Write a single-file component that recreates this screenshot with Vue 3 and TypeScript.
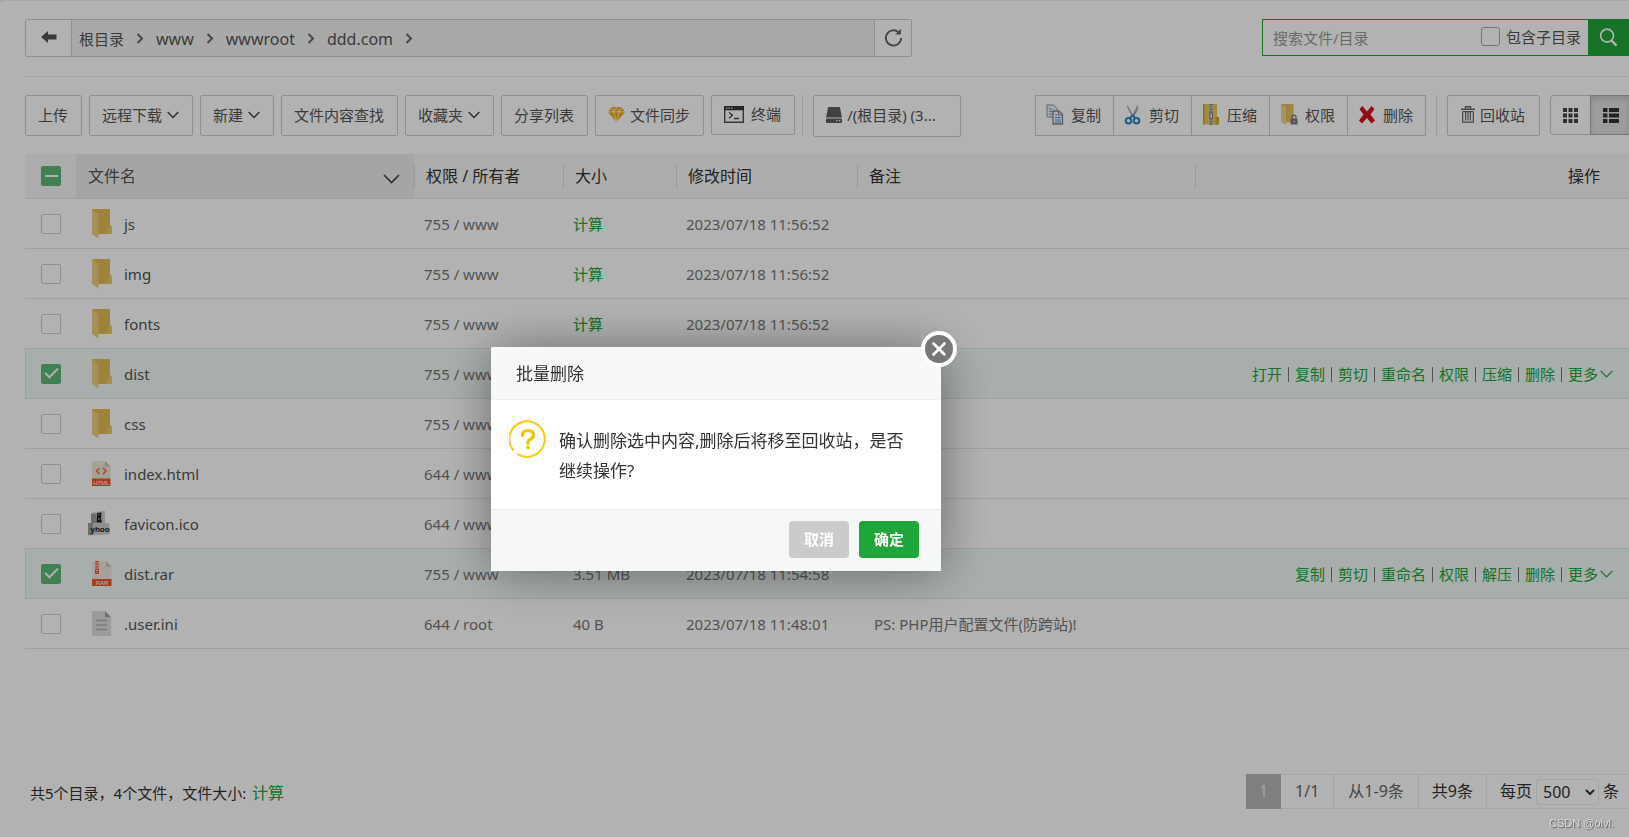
<script setup lang="ts">
import { ref } from 'vue'

type Kind = 'folder' | 'html' | 'ico' | 'rar' | 'text'

interface FileRow {
  name: string
  kind: Kind
  owner: string
  size: string
  time: string
  note?: string
  checked: boolean
  actions?: string[]
}

const crumbs: string[] = ['www', 'wwwroot', 'ddd.com']

const files = ref<FileRow[]>([
  { name: 'js', kind: 'folder', owner: '755 / www', size: '', time: '2023/07/18 11:56:52', checked: false },
  { name: 'img', kind: 'folder', owner: '755 / www', size: '', time: '2023/07/18 11:56:52', checked: false },
  { name: 'fonts', kind: 'folder', owner: '755 / www', size: '', time: '2023/07/18 11:56:52', checked: false },
  {
    name: 'dist', kind: 'folder', owner: '755 / www', size: '', time: '', checked: true,
    actions: ['打开', '复制', '剪切', '重命名', '权限', '压缩', '删除'],
  },
  { name: 'css', kind: 'folder', owner: '755 / www', size: '', time: '', checked: false },
  { name: 'index.html', kind: 'html', owner: '644 / www', size: '', time: '', checked: false },
  { name: 'favicon.ico', kind: 'ico', owner: '644 / www', size: '', time: '', checked: false },
  {
    name: 'dist.rar', kind: 'rar', owner: '755 / www', size: '3.51 MB', time: '2023/07/18 11:54:58', checked: true,
    actions: ['复制', '剪切', '重命名', '权限', '解压', '删除'],
  },
  { name: '.user.ini', kind: 'text', owner: '644 / root', size: '40 B', time: '2023/07/18 11:48:01', note: 'PS: PHP用户配置文件(防跨站)!', checked: false },
])

const keyword = ref('')
const recursive = ref(false)
const pageSize = ref('500')
</script>

<template>
  <div class="app">
    <main class="page">
      <div class="topbar">
        <nav class="path" aria-label="路径">
          <button class="back" type="button" aria-label="返回上一级">
            <svg width="16" height="12" viewBox="0 0 16 12"><path d="M0 6 7 0v3.600h8.500v4.800H7V12z" fill="#555" /></svg>
          </button>
          <div class="crumbs">
            <a class="root" href="#">根目录</a>
            <svg class="sep" width="8" height="11" viewBox="0 0 8 11"><path d="m1.500 1 4.500 4.500-4.500 4.500" fill="none" stroke="#666" stroke-width="2" /></svg>
            <template v-for="c in crumbs" :key="c">
              <a href="#">{{ c }}</a>
              <svg class="sep" width="8" height="11" viewBox="0 0 8 11"><path d="m1.500 1 4.500 4.500-4.500 4.500" fill="none" stroke="#666" stroke-width="2" /></svg>
            </template>
          </div>
          <button class="reload" type="button" aria-label="刷新">
            <svg width="19" height="19" viewBox="0 0 20 20"><path d="M15.500 4.600A8 8 0 1 0 18 10.500" fill="none" stroke="#666" stroke-width="2" /><path d="M17.800.8v6h-6z" fill="#666" /></svg>
          </button>
        </nav>
        <form class="search" @submit.prevent>
          <input v-model="keyword" class="keyword" type="text" placeholder="搜索文件/目录" aria-label="搜索文件/目录">
          <label class="sub"><input v-model="recursive" type="checkbox" class="plain">包含子目录</label>
          <button class="go" type="submit" aria-label="搜索">
            <svg width="19" height="19" viewBox="0 0 20 20"><circle cx="8.500" cy="8" r="6.800" fill="none" stroke="#fff" stroke-width="1.800" /><path d="m13 13 5.500 5.500" stroke="#fff" stroke-width="2.400" /></svg>
          </button>
        </form>
      </div>

      <div class="toolbar">
        <div class="tools">
          <button class="btn" type="button">上传</button>
          <button class="btn" type="button">远程下载<svg width="12" height="8" viewBox="0 0 12 8"><path d="m.7 1 5.300 5.500L11.300 1" fill="none" stroke="#444" stroke-width="1.500" /></svg></button>
          <button class="btn" type="button">新建<svg width="12" height="8" viewBox="0 0 12 8"><path d="m.7 1 5.300 5.500L11.300 1" fill="none" stroke="#444" stroke-width="1.500" /></svg></button>
          <button class="btn" type="button">文件内容查找</button>
          <button class="btn" type="button">收藏夹<svg width="12" height="8" viewBox="0 0 12 8"><path d="m.7 1 5.300 5.500L11.300 1" fill="none" stroke="#444" stroke-width="1.500" /></svg></button>
          <button class="btn" type="button">分享列表</button>
          <button class="btn" type="button">
            <svg width="17" height="15" viewBox="0 0 17 15"><path d="M3.500 0h10L17 5l-8.500 10L0 5z" fill="#f5a312" /><path d="M0 4.900h17M5.500 5l3 9.500 3-9.500M3.700.5 5.500 5l3-4.500 3 4.500 1.800-4.500" fill="none" stroke="#fff" stroke-width=".8" /></svg>
            文件同步
          </button>
          <button class="btn term" type="button">
            <svg width="20" height="17" viewBox="0 0 20 17"><path d="M.7.700h18.600v15.600H.700z" fill="#fff" stroke="#4b4f58" stroke-width="1.400" /><path d="M0 0h20v4.300H0z" fill="#33363c" /><path d="M2 2.200h1.300M4.600 2.200h1.300M7.200 2.200h1.300" stroke="#fff" stroke-width="1.200" /><path d="m5 6.500 3.500 2.800L5 12.200M10 12.500h5" fill="none" stroke="#444" stroke-width="1.300" /></svg>
            终端
          </button>
          <span class="bar"></span>
          <button class="btn disk" type="button">
            <svg width="16" height="16" viewBox="0 0 16 16"><path d="M3 0h10q.8 0 1 .8L16 10.500H0L2 .8Q2.200 0 3 0z" fill="#5d5d5d" /><rect y="11.500" width="16" height="4.500" rx="1" fill="#5d5d5d" /><path d="M10.500 13.700h1.200M13 13.700h1.200" stroke="#fff" stroke-width="1.200" /></svg>
            <span>/(根目录) (3...</span>
          </button>
        </div>

        <div class="tools right">
          <div class="group">
            <button class="btn" type="button">
              <svg width="18" height="21" viewBox="0 0 18 21"><path d="M1 1h6.500L11 4.500V13H1z" fill="#eef2f7" stroke="#888f99" /><path d="M3 5h3M3 7.500h4M3 10h4" stroke="#6c9bd0" /><path d="M7 7h6l3.500 3.500V20H7z" fill="#f6f8fb" stroke="#7c838c" stroke-width="1.300" /><path d="M12.500 7v4h4" fill="none" stroke="#7c838c" /><path d="M9 11h2.500M9 13.500h6M9 16h6M9 18h6" stroke="#4f8fd6" /></svg>
              复制
            </button>
            <button class="btn" type="button">
              <svg width="18" height="21" viewBox="0 0 18 21"><path d="m3 .5 7.500 13-1.500 1L3.500 4zM14 .5 7.500 12.500l1.500 2 4.800-9z" fill="#9aa4ad" /><ellipse cx="4.500" cy="16.800" rx="2.800" ry="2.800" fill="none" stroke="#2b83bd" stroke-width="2" /><ellipse cx="12.500" cy="16.800" rx="2.800" ry="2.800" fill="none" stroke="#2b83bd" stroke-width="2" /><path d="m5.500 14 3-2.500 3 2.500" fill="none" stroke="#2b83bd" stroke-width="1.800" /></svg>
              剪切
            </button>
            <button class="btn" type="button">
              <svg width="18" height="21" viewBox="0 0 18 21"><path d="M1 0h14v12.500l2 1.500v6.500H1z" fill="#e8c756" /><path d="M1 0h1.500v20.500H1zM13.500 13H17v7.500h-3.500z" fill="#c9a638" /><path d="M6.500 0h5v20.500h-5z" fill="#d8cfa9" /><path d="M9 0v20.500" stroke="#777" stroke-width="3" stroke-dasharray="1.200 1.200" /><rect x="8" y="9" width="2.500" height="5.500" fill="#eee" stroke="#666" stroke-width=".8" /></svg>
              压缩
            </button>
            <button class="btn" type="button">
              <svg width="18" height="21" viewBox="0 0 18 21"><path d="M1 0h12.500v18.500H6z" fill="#e5bd5c" /><path d="M1 0 6 3.500V21l-5-3z" fill="#f0d58f" /><rect x="10.500" y="14.500" width="7" height="6" rx="1" fill="#777" /><path d="M12 14.500v-1.300a2 2 0 0 1 4 0v1.300" fill="none" stroke="#777" stroke-width="1.300" /><path d="M14 16.500v2" stroke="#fff" /></svg>
              权限
            </button>
            <button class="btn" type="button">
              <svg width="18" height="21" viewBox="0 0 18 21"><path d="M4.500 2 9 7.500 13.500 2l3 3-4 5.500 4.500 6-3.500 3L9 14l-5 5.500-3-3 4.500-6L1.500 5z" fill="#d60f1c" /></svg>
              删除
            </button>
          </div>
          <span class="bar"></span>
          <button class="btn trash" type="button">
            <svg width="14" height="17" viewBox="0 0 14 17"><path d="M4.500 2.500V.7h5v1.800M0 3.200h14" fill="none" stroke="#666" stroke-width="1.400" /><path d="M1.700 5.500v10.700h10.600V5.500M4.600 5.500v9M7 5.500v9M9.400 5.500v9M1.700 5.600h10.600" fill="none" stroke="#666" stroke-width="1.200" /></svg>
            回收站
          </button>
          <div class="views">
            <button type="button" aria-label="网格视图">
              <svg width="15" height="15" viewBox="0 0 15 15"><path d="M2 0v15M7.500 0v15M13 0v15" stroke="#444" stroke-width="4" stroke-dasharray="4 1.500" /></svg>
            </button>
            <button type="button" class="on" aria-label="列表视图">
              <svg width="16" height="15" viewBox="0 0 16 15"><path d="M2.200 0v15" stroke="#333" stroke-width="4.400" stroke-dasharray="4 1.500" /><path d="M11 0v15" stroke="#333" stroke-width="10" stroke-dasharray="4 1.500" /></svg>
            </button>
          </div>
        </div>
      </div>

      <table class="files">
        <colgroup>
          <col class="c-check"><col class="c-name"><col class="c-owner"><col class="c-size"><col class="c-time"><col class="c-note"><col>
        </colgroup>
        <thead>
          <tr>
            <th class="check"><input type="checkbox" class="box partial" aria-label="全选"></th>
            <th class="sorted">
              <button type="button" class="sort">文件名<svg width="17" height="10" viewBox="0 0 17 10"><path d="m1 1 7.500 7.500L16 1" fill="none" stroke="#444" stroke-width="1.600" /></svg></button>
            </th>
            <th class="line">权限 / 所有者</th>
            <th class="line">大小</th>
            <th class="line">修改时间</th>
            <th class="line">备注</th>
            <th class="line ops-head">操作</th>
          </tr>
        </thead>
        <tbody>
          <tr v-for="f in files" :key="f.name" :class="{ picked: f.checked }">
            <td class="check"><input v-model="f.checked" type="checkbox" class="box" :aria-label="f.name"></td>
            <td>
              <div class="name">
                <span class="ficon">
                  <svg v-if="f.kind === 'folder'" width="20" height="30" viewBox="0 0 20 30"><path d="M0 0h18v15.500l1.500 2V25H6z" fill="#e2bb52" /><path d="M13 25h6.500v-7.500L18 16z" fill="#e9c763" /><path d="M0 0 6.500 5v24.500L0 25z" fill="#edcf80" /></svg>
                  <svg v-else-if="f.kind === 'html'" width="20" height="26" viewBox="0 0 20 26"><path d="M0 0h13l5.500 5.500V18H0z" fill="#ece8d6" /><path d="M13 0l5.500 5.500H13z" fill="#c8c4b6" /><path d="m7.500 7-3 3 3 3M11 7l3 3-3 3" fill="none" stroke="#f06a3a" stroke-width="1.500" /><path d="M0 17.500h18.500V25H0z" fill="#e9592b" /><text x="9.300" y="23.800" class="tag">HTML</text></svg>
                  <svg v-else-if="f.kind === 'rar'" width="20" height="26" viewBox="0 0 20 26"><path d="M0 0h14l5.500 5.500V18H0z" fill="#efe6e1" /><path d="M14 0l5.500 6H14z" fill="#cfc6c1" /><path d="M5 0v13" stroke="#e9592b" stroke-width="3.500" stroke-dasharray="1.500 1" /><path d="M3.500 8.500v4h3v-4" fill="none" stroke="#e9592b" /><path d="M0 18h19.500v7H0z" fill="#e9592b" /><text x="10" y="24" class="tag">RAR</text></svg>
                  <svg v-else-if="f.kind === 'text'" width="20" height="26" viewBox="0 0 20 26"><path d="M0 0h13l6 6v19H0z" fill="#dedede" /><path d="M13 0l6 6h-6z" fill="#a5a5a5" /><path d="M4 9.500h11M4 14h11M4 18.500h11" stroke="#b5b5b5" stroke-width="1.300" /></svg>
                  <svg v-else class="wide" width="24" height="26" viewBox="0 0 24 26"><path d="m3 2 14-1.500V13H3z" fill="#b8b8b8" /><path d="m7 1 10-1v12h4l1 11-8 1-14 .5V12h7z" fill="#cfcfcf" /><path d="M0 12h5v12H0zM3 3h5v9H3z" fill="#9b9b9b" /><path d="m9 2 4.500-.5-.5 6 1 4H8.500z" fill="#222" /><path d="M10.500 3.500h1M10 8h2" stroke="#bbb" /><text x="12" y="21" class="logo">yhoo</text></svg>
                </span>
                <a href="#">{{ f.name }}</a>
              </div>
            </td>
            <td>{{ f.owner }}</td>
            <td><a v-if="!f.size && f.time" href="#" class="green">计算</a><template v-else>{{ f.size }}</template></td>
            <td>{{ f.time }}</td>
            <td class="note">{{ f.note }}</td>
            <td>
              <div v-if="f.actions" class="ops">
                <template v-for="a in f.actions" :key="a"><a href="#" class="green">{{ a }}</a><i></i></template>
                <a href="#" class="green more">更多<svg width="13" height="8" viewBox="0 0 13 8"><path d="m.6.800 5.900 6 5.900-6" fill="none" stroke="#20a53a" stroke-width="1.200" /></svg></a>
              </div>
            </td>
          </tr>
        </tbody>
      </table>

      <footer class="foot">
        <p class="total">共5个目录，4个文件，文件大小: <a href="#" class="green">计算</a></p>
        <div class="pager">
          <span class="current">1</span>
          <span class="soft">1/1</span>
          <span class="soft">从1-9条</span>
          <span>共9条</span>
          <label class="per">每页
            <select v-model="pageSize"><option>500</option></select>
            条</label>
        </div>
      </footer>
    </main>

    <div class="shade"></div>

    <section class="dialog" role="dialog" aria-labelledby="dialog-title">
      <h2 id="dialog-title">批量删除</h2>
      <button class="close" type="button" aria-label="关闭">
        <svg width="14" height="14" viewBox="0 0 14 14"><path d="m1.500 1.500 11 11M12.500 1.500l-11 11" stroke="#fff" stroke-width="2.600" stroke-linecap="round" /></svg>
      </button>
      <div class="message">
        <svg width="38" height="38" viewBox="0 0 38 38"><path d="M8.500 34A17.700 17.700 0 1 0 4.500 30.500" fill="none" stroke="#fac80f" stroke-width="2" /><path d="M13.500 15.500q0-5 5.500-5t5.500 4.500q0 2.800-3 4.300-2.500 1.200-2.500 3.500v.7" fill="none" stroke="#f5c400" stroke-width="3.200" stroke-linecap="round" /><circle cx="19" cy="27.500" r="1.900" fill="#f5c400" /></svg>
        <p>确认删除选中内容,删除后将移至回收站，是否继续操作?</p>
      </div>
      <div class="buttons">
        <button type="button" class="cancel">取消</button>
        <button type="button" class="ok">确定</button>
      </div>
    </section>

    <div class="mark">CSDN @olvl.</div>
  </div>
</template>

<style>
body {
  background: #f1f1f1;
}
</style>

<style scoped>
.app {
  min-height: 100vh;
  box-sizing: border-box;
  padding-top: 1px;
  display: flex;
  overflow: hidden;
  font-family: "Noto Sans", "Noto Sans CJK SC", sans-serif;
  font-size: 15px;
  line-height: 20px;
  color: #555;
}

button,
input,
select {
  font: inherit;
  color: inherit;
  margin: 0;
}

button {
  cursor: pointer;
}

a {
  color: inherit;
  text-decoration: none;
}

svg {
  flex: none;
}

.green {
  color: #20a53a;
}

.page {
  flex: 1;
  min-width: 0;
  display: flex;
  flex-direction: column;
  padding: 18px 0 28px 25px;
  background: #fff;
  border-radius: 5px 0 0;
}

.topbar {
  display: flex;
  justify-content: space-between;
  align-items: flex-start;
  padding-bottom: 19px;
  border-bottom: 1px solid #ebebeb;
}

.path {
  display: flex;
  flex: 0 1 887px;
  height: 38px;
  box-sizing: border-box;
  border: 1px solid #ccc;
  border-radius: 2px;
}

.back,
.reload {
  display: flex;
  align-items: center;
  justify-content: center;
  width: 45px;
  padding: 0 0 2px;
  border: 0;
  background: #fff;
}

.reload {
  width: 36px;
}

.crumbs {
  flex: 1;
  display: flex;
  align-items: center;
  padding: 1px 0 0 7px;
  background: #f3f3f3;
  border: solid #ccc;
  border-width: 0 1px;
  font-size: 16px;
}

.crumbs .root {
  font-size: 15px;
}

.sep {
  margin: 0 12px;
}

.search {
  display: flex;
  flex: 0 0 367px;
  height: 37px;
  box-sizing: border-box;
  border: 1px solid #20a53a;
  border-right: 0;
}

.keyword {
  flex: 1;
  min-width: 0;
  padding: 0 10px;
  border: 0;
  outline: 0;
  background: none;
}

.keyword::placeholder {
  color: #999;
}

.sub {
  display: flex;
  align-items: center;
  gap: 6px;
  padding: 0 7px 2px 0;
}

.plain {
  appearance: none;
  width: 19px;
  height: 19px;
  border: 1px solid #aaa;
  border-radius: 3px;
}

.go {
  display: flex;
  align-items: center;
  justify-content: center;
  width: 41px;
  padding: 0;
  border: 0;
  background: #20a53a;
}

.toolbar {
  display: flex;
  justify-content: space-between;
  align-items: flex-start;
  padding: 18px 0 17px;
}

.tools {
  display: flex;
  gap: 7px;
}

.tools.right {
  gap: 10px;
}

.btn {
  display: flex;
  align-items: center;
  gap: 5px;
  height: 41px;
  padding: 0 13px 2px 12px;
  border: 1px solid #ccc;
  border-radius: 2px;
  background: #fff;
  white-space: nowrap;
}

.term {
  gap: 7px;
  height: 40px;
}

.disk {
  width: 148px;
  height: 42px;
  margin-left: 3px;
}

.bar {
  width: 1px;
  height: 41px;
  background: #e0e0e0;
}

.group {
  display: flex;
}

.group .btn {
  gap: 7px;
  padding: 0 12px 2px 10px;
  border-radius: 0;
}

.group .btn + .btn {
  border-left: 0;
}

.trash {
  padding: 0 14px 2px 13px;
}

.views {
  display: flex;
}

.views button {
  display: flex;
  align-items: center;
  justify-content: center;
  width: 40px;
  height: 40px;
  padding: 0;
  border: 1px solid #ccc;
  border-right: 0;
  border-radius: 4px 0 0 4px;
  background: #fff;
}

.views .on {
  width: 39px;
  padding-left: 2px;
  border-color: #adadad;
  border-radius: 0;
  background: #e0e0e0;
  box-shadow: inset 0 3px 5px rgba(0, 0, 0, 0.125);
}

.files {
  width: 100%;
  table-layout: fixed;
  border-collapse: separate;
  border-spacing: 0;
}

.c-check { width: 51px; }
.c-name { width: 338px; }
.c-owner { width: 149px; }
.c-size { width: 113px; }
.c-time { width: 181px; }
.c-note { width: 338px; }

th,
td {
  box-sizing: border-box;
  padding: 0 0 0 10px;
  text-align: left;
  font-weight: 400;
  white-space: nowrap;
}

th {
  height: 45px;
  padding-left: 12px;
  border-bottom: 1px solid #e6e6e6;
  background-color: #f6f6f6;
  font-size: 16px;
  color: #333;
}

td {
  height: 50px;
  border-bottom: 1px solid #e6e6e6;
  color: #777;
}

.line {
  background-image: linear-gradient(#ddd, #ddd);
  background-repeat: no-repeat;
  background-position: left center;
  background-size: 1px 25px;
}

.sorted {
  background-color: #ececec;
}

.sort {
  display: flex;
  width: 100%;
  align-items: center;
  justify-content: space-between;
  padding: 0 14px 0 0;
  border: 0;
  background: none;
  color: #555;
}

.sort svg {
  margin-top: 5px;
}

.ops-head {
  text-align: right;
  padding-right: 29px;
}

.check {
  padding-left: 16px;
}

.box {
  appearance: none;
  display: grid;
  place-items: center;
  width: 20px;
  height: 20px;
  border: 1px solid #ccc;
  border-radius: 2px;
}

.box:checked,
.partial {
  border-color: #5cb878;
  background: #5cb878;
}

.box:checked::after {
  content: "";
  width: 11px;
  height: 5px;
  margin-bottom: 4px;
  border: solid #fff;
  border-width: 0 0 2px 2px;
  transform: rotate(-45deg);
}

.partial::after {
  content: "";
  width: 13px;
  height: 2px;
  background: #fff;
}

.picked td {
  background: #f0f9f6;
  border-bottom-color: #d9ebe5;
}

.picked td:first-child {
  padding-left: 15px;
  border-left: 1px solid #d9ebe5;
}

.name {
  display: flex;
  align-items: center;
  gap: 12px;
  padding-left: 2px;
  color: #555;
}

.ficon {
  display: flex;
  justify-content: flex-end;
  width: 24px;
}

.tag {
  fill: #fff;
  font: 6px "Liberation Sans", sans-serif;
  text-anchor: middle;
}

.logo {
  fill: #111;
  font: bold 8px "Liberation Sans", sans-serif;
  text-anchor: middle;
}

.note {
  padding-left: 17px;
}

.ops {
  display: flex;
  justify-content: flex-end;
  align-items: center;
  padding-right: 16px;
}

.ops i {
  width: 1px;
  height: 15px;
  margin: 2px 6px 0;
  background: #777;
}

.more {
  display: flex;
  align-items: center;
  gap: 2px;
}

.foot {
  display: flex;
  justify-content: space-between;
  align-items: center;
  margin-top: auto;
  padding-left: 5px;
  color: #333;
}

.total {
  margin: 2px 0 0;
}

.total .green {
  margin-left: 2px;
  font-size: 16px;
}

.pager {
  display: flex;
  height: 35px;
  box-sizing: border-box;
  border: solid #ececec;
  border-width: 1px 0;
  font-size: 16px;
  line-height: 33px;
}

.pager > * {
  padding: 0 13px;
  border-right: 1px solid #ececec;
}

.pager .current {
  margin: -1px 0;
  line-height: 35px;
  background: #b6b6b6;
  border: 0;
  color: #eee;
}

.pager .soft {
  padding: 0 14px;
  color: #666;
}

.pager .per {
  display: flex;
  align-items: center;
  gap: 4px;
  padding-right: 10px;
  border-right: 0;
}

.per select {
  width: 63px;
  height: 26px;
  padding: 0 0 0 2px;
  border: 1px solid #ececec;
  border-radius: 3px;
  background: #fff;
}

.shade {
  position: fixed;
  inset: 0;
  background: rgba(0, 0, 0, 0.3);
}

.dialog {
  position: fixed;
  top: 347px;
  left: 491px;
  width: 450px;
  border-radius: 2px;
  background: #fff;
  box-shadow: 1px 1px 50px rgba(0, 0, 0, 0.4);
  color: #333;
  font-size: 17px;
}

.dialog h2 {
  margin: 0;
  padding: 1px 25px 0;
  border-bottom: 1px solid #eee;
  border-radius: 2px 2px 0 0;
  background: #f8f8f8;
  font-size: 17px;
  font-weight: 400;
  line-height: 51px;
}

.close {
  position: absolute;
  top: -16px;
  right: -16px;
  display: grid;
  place-items: center;
  width: 36px;
  height: 36px;
  padding: 0;
  border: 4px solid #fff;
  border-radius: 50%;
  background: #777;
}

.message {
  display: flex;
  gap: 12px;
  padding: 20px 22px 23px 18px;
}

.message p {
  margin: 6px 0 0;
  line-height: 30px;
  line-break: anywhere;
}

.buttons {
  display: flex;
  justify-content: flex-end;
  gap: 10px;
  padding: 11px 22px 13px;
  border-top: 1px solid #e6ecea;
  background: #f6f8f8;
}

.buttons button {
  width: 60px;
  height: 37px;
  padding: 0 0 2px;
  border: 0;
  border-radius: 4px;
  background: #cbcbcb;
  color: #fff;
  font-size: 15px;
  font-weight: 700;
}

.buttons .ok {
  background: #20a53a;
}

.mark {
  position: fixed;
  right: 15px;
  bottom: 6px;
  font: 11px/16px "Liberation Sans", sans-serif;
  color: #ddd;
  text-shadow: 1px 1px 1px #555;
}
</style>
